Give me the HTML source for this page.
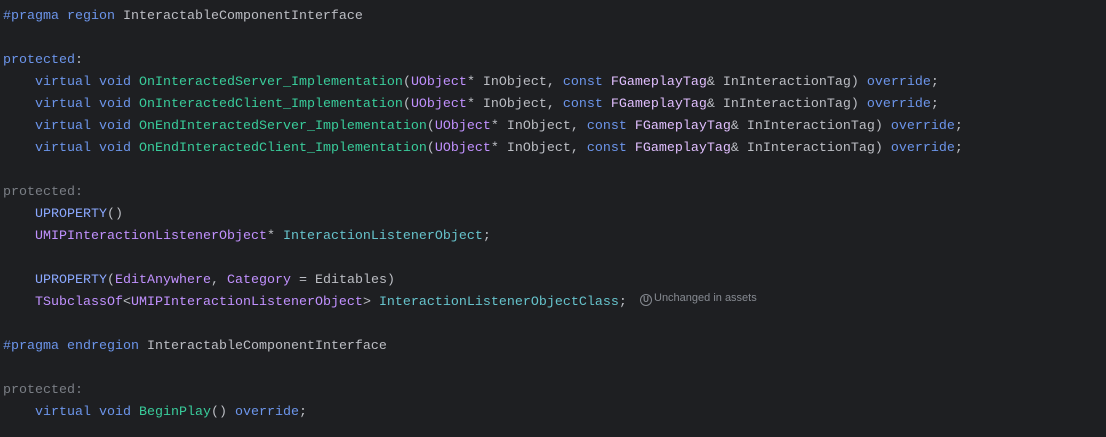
<!DOCTYPE html>
<html><head><meta charset="utf-8"><style>
html,body{margin:0;padding:0;background:#1e1f22;width:1106px;height:437px;overflow:hidden}
pre{margin:0;position:absolute;left:3px;top:6px;font-family:"Liberation Mono",monospace;font-size:13.33px;line-height:22px;color:#bcbec4;white-space:pre}
.k{color:#6c95eb}.f{color:#39cc9b}.t{color:#c191ff}.s{color:#e1bfff}.m{color:#66c3cc}.g{color:#7a7e85}.u{color:#8ba8ff}.p{color:#bcbec4}
.hint{position:absolute;left:640px;top:291px;font-family:"Liberation Sans",sans-serif;font-size:11px;color:#868a91;line-height:14px}
.hint i{display:inline-block;width:10px;height:10px;border:1px solid #868a91;border-radius:50%;font-style:normal;font-size:8px;line-height:10px;text-align:center;vertical-align:-1px;margin-right:2px;font-weight:bold}
</style></head><body>
<pre><span class="k">#pragma region</span> InteractableComponentInterface

<span class="k">protected</span>:
    <span class="k">virtual void</span> <span class="f">OnInteractedServer_Implementation</span>(<span class="t">UObject</span>* InObject, <span class="k">const</span> <span class="s">FGameplayTag</span>&amp; InInteractionTag) <span class="k">override</span>;
    <span class="k">virtual void</span> <span class="f">OnInteractedClient_Implementation</span>(<span class="t">UObject</span>* InObject, <span class="k">const</span> <span class="s">FGameplayTag</span>&amp; InInteractionTag) <span class="k">override</span>;
    <span class="k">virtual void</span> <span class="f">OnEndInteractedServer_Implementation</span>(<span class="t">UObject</span>* InObject, <span class="k">const</span> <span class="s">FGameplayTag</span>&amp; InInteractionTag) <span class="k">override</span>;
    <span class="k">virtual void</span> <span class="f">OnEndInteractedClient_Implementation</span>(<span class="t">UObject</span>* InObject, <span class="k">const</span> <span class="s">FGameplayTag</span>&amp; InInteractionTag) <span class="k">override</span>;

<span class="g">protected:</span>
    <span class="u">UPROPERTY</span>()
    <span class="t">UMIPInteractionListenerObject</span>* <span class="m">InteractionListenerObject</span>;

    <span class="u">UPROPERTY</span>(<span class="t">EditAnywhere</span>, <span class="t">Category</span> = Editables)
    <span class="t">TSubclassOf</span>&lt;<span class="t">UMIPInteractionListenerObject</span>&gt; <span class="m">InteractionListenerObjectClass</span>;

<span class="k">#pragma endregion</span> InteractableComponentInterface

<span class="g">protected:</span>
    <span class="k">virtual void</span> <span class="f">BeginPlay</span>() <span class="k">override</span>;
</pre>
<div class="hint"><i>U</i>Unchanged in assets</div>
</body></html>
